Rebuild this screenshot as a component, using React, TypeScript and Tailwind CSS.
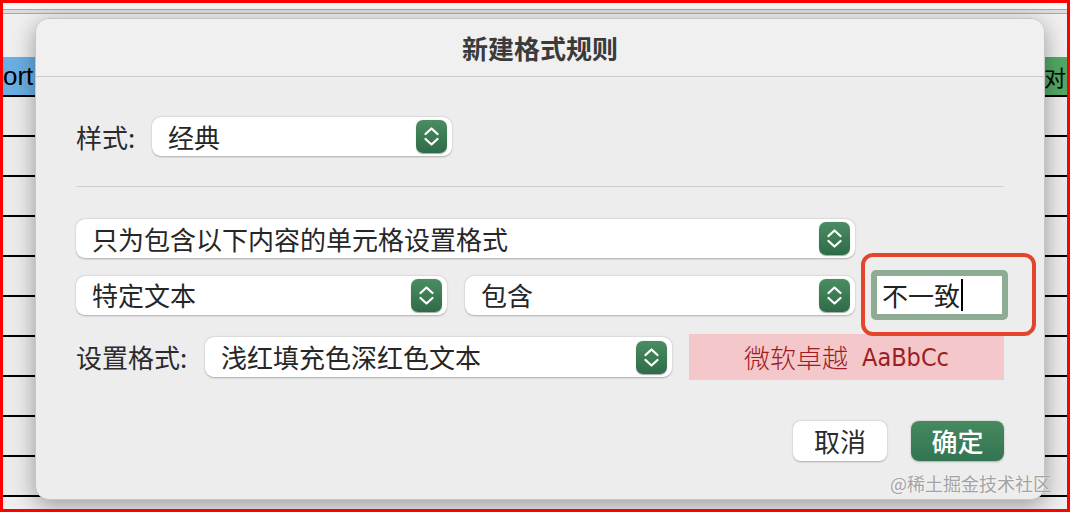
import React from "react";

function Stepper() {
  return (
    <div className="shrink-0 w-[31px] h-[33px] rounded-[7px] bg-linear-to-b from-[#4a8d62] to-[#2e6c47] flex items-center justify-center shadow-[0_0.5px_1px_rgba(0,0,0,0.35)]">
      <svg width="31" height="33" viewBox="0 0 31 33" fill="none" stroke="white" strokeWidth="2.3" strokeLinecap="round" strokeLinejoin="round">
        <path d="M9.5 14 L15.5 8.5 L21.5 14" />
        <path d="M9.5 19 L15.5 24.5 L21.5 19" />
      </svg>
    </div>
  );
}

function Select({ className, text }: { className: string; text: string }) {
  return (
    <div
      className={
        "shrink-0 flex items-center justify-between bg-white rounded-[9px] shadow-[0_0.5px_2px_rgba(0,0,0,0.28)] pl-[16px] pr-[5px] " +
        className
      }
    >
      <span className="text-[26px] leading-none text-[#262626]">{text}</span>
      <Stepper />
    </div>
  );
}

function SheetRow({ first, second, third }: { first?: string; second?: string; third?: string }) {
  return (
    <div className="flex h-[40px] border-b-2 border-black bg-[#ebebeb] text-[24px] text-black">
      <div className="w-[560px] border-r-2 border-black flex items-center">{first}</div>
      <div className="w-[245px] border-r-2 border-black flex items-center pl-[24px]">{second}</div>
      <div className="flex-1 flex items-center pl-[3px]">{third}</div>
    </div>
  );
}

export default function App() {
  return (
    <div className="relative w-[1070px] h-[512px] overflow-hidden border-[3px] border-[#ff0000] bg-[#efefef] font-['Noto_Sans_CJK_SC','Noto_Sans',sans-serif]">
      {/* spreadsheet background */}
      <div className="flex flex-col">
        <div className="h-[6px] bg-[#f7f7f7]" />
        <div className="h-[5px] border-t border-b border-[#a9a9a9] bg-[#dcdcdc]" />
        <div className="h-[43px] bg-[#efefef]" />
        <div className="flex h-[40px] border-b-2 border-black">
          <div className="w-[560px] bg-[#6aaee2] flex items-center text-[26px] font-['Liberation_Sans',sans-serif] text-black leading-none">
            ort
          </div>
          <div className="flex-1 bg-[#52a865] flex items-center justify-end pr-[1px] text-[22px] text-black leading-none">
            对
          </div>
        </div>
        <SheetRow />
        <SheetRow />
        <SheetRow />
        <SheetRow />
        <SheetRow />
        <SheetRow />
        <SheetRow />
        <SheetRow />
        <SheetRow />
        <SheetRow first="" second="致" third="不存在" />
      </div>

      {/* dialog */}
      <div className="absolute left-[32px] top-[15px] w-[1010px] h-[482px] rounded-[14px] bg-[#ededed] border border-[#c6c6c6] shadow-[0_6px_22px_rgba(0,0,0,0.35)] flex flex-col overflow-hidden">
        <div className="h-[58px] shrink-0 flex items-center justify-center border-b border-[#cdcdcd] bg-[#f0f0f0]">
          <span className="text-[26px] font-bold text-[#3b3b3b] leading-none">新建格式规则</span>
        </div>

        <div className="flex flex-col px-[40px]">
          {/* row 1 */}
          <div className="mt-[40px] flex items-center h-[39px]">
            <div className="w-[76px] shrink-0 text-[26px] leading-none text-[#2b2b2b]">样式:</div>
            <Select className="w-[300px] h-[39px]" text="经典" />
          </div>

          <div className="mt-[30px] h-px bg-[#cfcfcf]" />

          {/* row 2 */}
          <div className="mt-[32px] flex items-center">
            <Select className="w-[779px] h-[39px]" text="只为包含以下内容的单元格设置格式" />
          </div>

          {/* row 3 */}
          <div className="mt-[12px] flex items-center h-[50px]">
            <Select className="w-[371px] h-[39px]" text="特定文本" />
            <Select className="ml-[18px] w-[390px] h-[39px]" text="包含" />
            <div className="relative shrink-0 ml-[16px] w-[137px] h-[50px] rounded-[5px] bg-[#8eab93] p-[6px]">
              <div className="w-full h-full bg-white flex items-center pl-[5px] text-[26px] leading-none text-[#222]">
                不一致
                <span className="w-[2px] h-[32px] bg-black ml-[1px]" />
              </div>
              <div className="absolute left-[-10px] top-[-17px] right-[-28px] bottom-[-16px] border-[4px] border-[#e4442b] rounded-[12px]" />
            </div>
          </div>

          {/* row 4 */}
          <div className="mt-[14px] flex items-center h-[46px]">
            <div className="w-[129px] shrink-0 text-[26px] leading-none text-[#2b2b2b]">设置格式:</div>
            <Select className="w-[467px] h-[40px]" text="浅红填充色深红色文本" />
            <div className="ml-[17px] w-[315px] h-[46px] bg-[#f4c7cb] flex items-center justify-center gap-[14px] text-[#9c1d22]">
              <span className="text-[26px] font-light leading-none">微软卓越</span>
              <span className="text-[25px] leading-none font-['DejaVu_Sans_Condensed','DejaVu_Sans',sans-serif]">AaBbCc</span>
            </div>
          </div>

          {/* buttons */}
          <div className="mt-[41px] flex justify-end gap-[24px]">
            <div className="w-[94px] h-[40px] rounded-[8px] bg-white shadow-[0_0.5px_2px_rgba(0,0,0,0.28)] flex items-center justify-center text-[26px] leading-none text-[#2b2b2b]">
              取消
            </div>
            <div className="w-[93px] h-[40px] rounded-[8px] bg-linear-to-b from-[#468a5e] to-[#337452] shadow-[0_0.5px_2px_rgba(0,0,0,0.28)] flex items-center justify-center text-[26px] font-medium leading-none text-white">
              确定
            </div>
          </div>
        </div>
      </div>

      {/* watermark */}
      <div className="absolute left-[887px] top-[471px] text-[18px] leading-none text-[#a3a3a3] [text-shadow:0_0_2px_rgba(255,255,255,0.9)]">
        @稀土掘金技术社区
      </div>
    </div>
  );
}
